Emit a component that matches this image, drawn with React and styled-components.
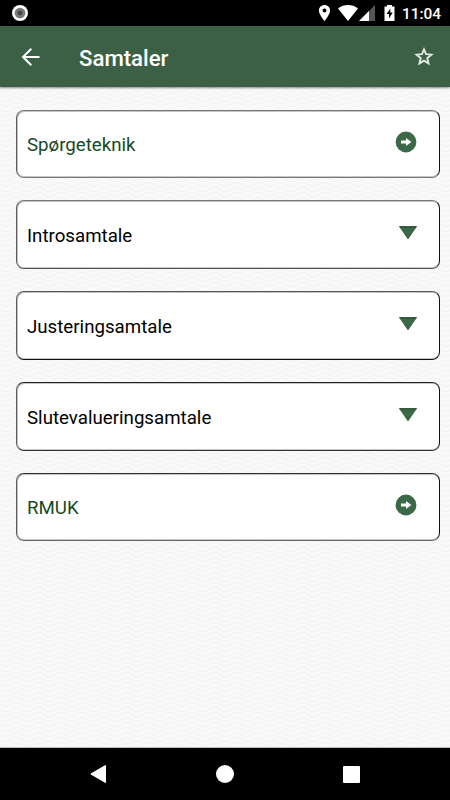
import React from "react";
import styled, { createGlobalStyle } from "styled-components";

const Global = createGlobalStyle`
  * { box-sizing: border-box; }
  body { margin: 0; background: #000; }
`;

const Screen = styled.div`
  width: 450px;
  height: 800px;
  display: flex;
  flex-direction: column;
  overflow: hidden;
  font-family: Roboto, sans-serif;
  background: #000;
`;

const StatusBar = styled.div`
  height: 26px;
  flex: none;
  display: flex;
  align-items: center;
  padding: 0 9px 0 11px;
  color: #fff;
`;

const StatusIcons = styled.svg`
  margin-left: auto;
  width: 82px;
  height: 26px;
`;

const Clock = styled.time`
  width: 39px;
  margin-left: 3px;
  font-size: 15.4px;
  font-weight: 500;
  line-height: 26px;
  padding-top: 2px;
  white-space: nowrap;
`;

const AppBar = styled.header`
  height: 61px;
  flex: none;
  display: flex;
  align-items: center;
  padding: 0 14px 0 19px;
  background: #3b6046;
  box-shadow: 0 1px 2px rgba(0, 0, 0, 0.45);
  z-index: 1;
`;

const Title = styled.h1`
  margin: 2px 0 0 36px;
  flex: 1;
  color: #fff;
  font-size: 22.2px;
  font-weight: 500;
  line-height: 28px;
`;

const Content = styled.main`
  height: 661px;
  flex: none;
  position: relative;
  background: #f9f9f9;
  border-bottom: 1px solid #bbb;
`;

const Waves = styled.svg`
  position: absolute;
  inset: 0;
  width: 100%;
  height: 100%;
`;

const List = styled.ul`
  position: relative;
  list-style: none;
  margin: 0;
  padding: 22.6px 10px 0 16px;
  display: flex;
  flex-direction: column;
  gap: 22.2px;
`;

const Card = styled.li`
  height: 68.6px;
  display: flex;
  align-items: center;
  justify-content: space-between;
  padding: 2.8px 22px 0 10px;
  background: #fff;
  border: 1px solid;
  border-color: ${(p) => p.$top} #111 ${(p) => p.$bottom} #5c5c5c;
  border-radius: 8px;
  box-shadow: inset 1px 1px 0 #c4c4c4, inset 0 -1px 0 #c8c8c8;
  color: ${(p) => (p.$link ? "#174a24" : "#000")};
  font-size: 18.7px;
  line-height: 24px;
`;

const Icon = styled.svg`
  display: block;
  flex: none;
`;

const CardIcon = styled(Icon)`
  margin-top: -6px;
`;

const NavBar = styled.nav`
  height: 52px;
  flex: none;
  display: flex;
  align-items: center;
  justify-content: space-between;
  padding: 0 90px;
`;

const items = [
  { label: "Spørgeteknik", link: true, top: "#777", bottom: "#777" },
  { label: "Introsamtale", top: "#777", bottom: "#555" },
  { label: "Justeringsamtale", top: "#555", bottom: "#111" },
  { label: "Slutevalueringsamtale", top: "#222", bottom: "#333" },
  { label: "RMUK", link: true, top: "#333", bottom: "#666" },
];

const LinkIcon = () => (
  <CardIcon width="22" height="22" viewBox="0 0 22 22">
    <circle cx="11" cy="11" r="10.4" fill="#3b6846" />
    <path d="M6 9.5h5V6.9l5.4 4.1-5.4 4.1v-2.6H6z" fill="#fff" />
  </CardIcon>
);

const ExpandIcon = () => (
  <CardIcon width="18" height="14" viewBox="0 0 18 14">
    <path d="M0 .5h18L9 13.5z" fill="#3b6846" />
    <path d="M0 .2h18l-.7 1H.7z" fill="#153d20" />
  </CardIcon>
);

export default function App() {
  return (
    <>
      <Global />
      <Screen>
        <StatusBar>
          <Icon width="18" height="18" viewBox="0 0 18 18">
            <circle cx="9" cy="9" r="8" fill="#fff" />
            <circle cx="9" cy="9" r="5.3" fill="#777" />
            <circle cx="9" cy="9" r="2.3" fill="#444" />
          </Icon>
          <StatusIcons viewBox="317 0 82 26">
            <path fillRule="evenodd" d="M324.5 5c-3.2 0-5.6 2.4-5.6 5.5 0 4.1 5.6 10.5 5.6 10.5s5.6-6.4 5.6-10.5c0-3.1-2.4-5.5-5.6-5.5zm0 3.6a2 2 0 1 1 0 4 2 2 0 0 1 0-4z" fill="#fff" />
            <path d="M338 8.5c5.5-4.6 14.5-4.6 20 0L348 21z" fill="#fff" />
            <path d="M375 5v16h-16z" fill="#555" />
            <path d="M369 11v10h-10z" fill="#fff" />
            <path fillRule="evenodd" d="M387 5h5v1.5h2.5V21h-10V6.5h2.5zm3.5 3.5l-4 5.5h2.5v4.5l3.7-6h-2.5z" fill="#fff" />
          </StatusIcons>
          <Clock>11:04</Clock>
        </StatusBar>
        <AppBar>
          <Icon width="24" height="24" viewBox="0 0 24 24" fill="none" stroke="#fff" strokeWidth="2">
            <path d="M20.5 12H4M12.3 3.7L4 12l8.3 8.3" />
          </Icon>
          <Title>Samtaler</Title>
          <Icon width="24" height="24" viewBox="0 0 24 24">
            <path d="M12 4.9l2 4.8 5.4.45-4.1 3.55 1.25 5.2L12 16.1l-4.55 2.8 1.25-5.2-4.1-3.55 5.4-.45z" transform="translate(0 -.5)" fill="none" stroke="#e4e8e5" strokeWidth="1.9" />
          </Icon>
        </AppBar>
        <Content>
          <Waves>
            <defs>
              <pattern id="waves" width="22" height="5" patternUnits="userSpaceOnUse">
                <g fill="none" stroke="#f3f3f3" strokeWidth="1.2">
                  <path d="M-11 -2.5q5.500-4 11 0t11 0t11 0t11 0" />
                  <path d="M-11 2.5q5.500-4 11 0t11 0t11 0t11 0" />
                  <path d="M-11 7.5q5.500-4 11 0t11 0t11 0t11 0" />
                </g>
              </pattern>
            </defs>
            <rect width="450" height="661" fill="url(#waves)" />
          </Waves>
          <List>
            {items.map((item) => (
              <Card key={item.label} $link={item.link} $top={item.top} $bottom={item.bottom}>
                {item.label}
                {item.link ? <LinkIcon /> : <ExpandIcon />}
              </Card>
            ))}
          </List>
        </Content>
        <NavBar>
          <Icon width="17" height="18" viewBox="0 0 17 18">
            <path d="M15.5.5L.8 9l14.7 8.5z" fill="#fff" stroke="#fff" strokeLinejoin="round" />
          </Icon>
          <Icon width="18" height="18" viewBox="0 0 18 18">
            <circle cx="9" cy="9" r="9" fill="#fff" />
          </Icon>
          <Icon width="17" height="17" viewBox="0 0 17 17">
            <rect width="17" height="17" rx="1" fill="#fff" />
          </Icon>
        </NavBar>
      </Screen>
    </>
  );
}
